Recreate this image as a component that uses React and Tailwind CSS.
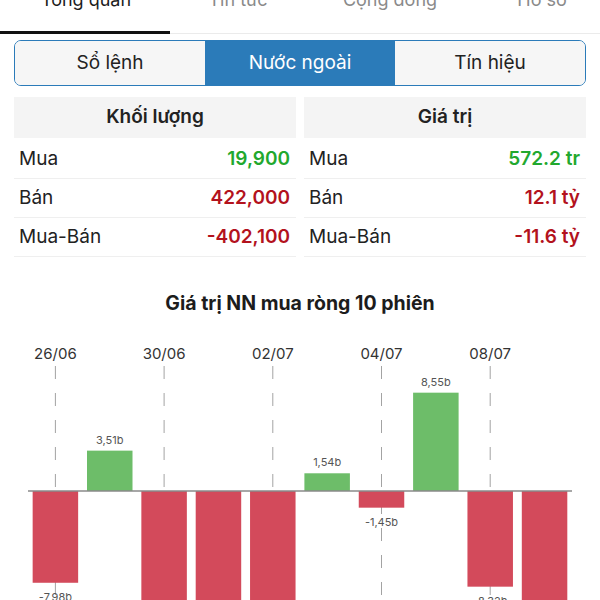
import React from 'react';

const tabs = ['Tổng quan', 'Tin tức', 'Cộng đồng', 'Hồ sơ'];
const segments = ['Sổ lệnh', 'Nước ngoài', 'Tín hiệu'];

const tables = [
  {
    title: 'Khối lượng',
    rows: [
      { label: 'Mua', value: '19,900', up: true },
      { label: 'Bán', value: '422,000' },
      { label: 'Mua-Bán', value: '-402,100' },
    ],
  },
  {
    title: 'Giá trị',
    rows: [
      { label: 'Mua', value: '572.2 tr', up: true },
      { label: 'Bán', value: '12.1 tỷ' },
      { label: 'Mua-Bán', value: '-11.6 tỷ' },
    ],
  },
];

// net foreign value per session (billion)
const sessions = [-7.98, 3.51, -12.64, -14.1, -10.92, 1.54, -1.45, 8.55, -8.32, -13.27];
const dates = ['26/06', '30/06', '02/07', '04/07', '08/07'];

const ZERO = 491;
const SCALE = 11.5;
const BAR_W = 45.5;
const center = (i) => 55.4 + i * 54.35;
const fmt = (v) => v.toFixed(2).replace('.', ',') + 'b';

const NetChart = () => (
  <svg width="600" height="300" viewBox="0 315 600 300" className="block">
    {dates.map((d, k) => (
      <g key={d}>
        <text x={center(k * 2)} y={359} textAnchor="middle" fontSize="15" fill="#333">
          {d}
        </text>
        <line
          x1={center(k * 2)}
          x2={center(k * 2)}
          y1={366}
          y2={620}
          stroke="#a3a3a3"
          strokeWidth="1"
          strokeDasharray="13 14"
        />
      </g>
    ))}
    {sessions.map((v, i) => {
      const h = Math.abs(v) * SCALE;
      const up = v >= 0;
      const x = center(i) - BAR_W / 2;
      return (
        <g key={i}>
          <rect x={x} y={up ? ZERO - h : ZERO} width={BAR_W} height={h} fill={up ? '#6dbd69' : '#d34a5b'} />
          <text
            x={center(i)}
            y={up ? ZERO - h - 7 : ZERO + h + 18}
            textAnchor="middle"
            fontSize="11"
            fill="#555"
          >
            {fmt(v)}
          </text>
        </g>
      );
    })}
    <line x1={28} x2={572} y1={ZERO} y2={ZERO} stroke="#8a8a8a" strokeWidth="1.5" />
  </svg>
);

export default function App() {
  return (
    <div className="w-[600px] h-[600px] overflow-hidden bg-white font-['Inter',sans-serif]">
      {/* top tabs, scrolled so the labels are half hidden */}
      <div className="relative h-[34px] border-b border-[#ebebeb]">
        <div className="flex -translate-y-[10px] ml-[10px]">
          {tabs.map((t, i) => (
            <div
              key={t}
              className={`w-[152px] shrink-0 text-center text-[18px] leading-[20px] ${
                i === 0 ? 'text-[#1c1c1c]' : 'text-[#8a8a8a]'
              }`}
            >
              {t}
            </div>
          ))}
        </div>
        <div className="absolute left-0 -bottom-px w-[170px] h-[3px] bg-[#111]" />
      </div>

      {/* segmented control */}
      <div className="mx-[14px] mt-[6px] h-[46px] flex rounded-[7px] border-[1.5px] border-[#2b7bb9] overflow-hidden">
        {segments.map((s, i) => (
          <div
            key={s}
            className={`flex-1 flex items-center justify-center text-[19px] ${
              i === 1 ? 'bg-[#2b7bb9] text-white' : 'bg-[#f6f6f6] text-[#222]'
            }`}
          >
            {s}
          </div>
        ))}
      </div>

      {/* summary tables */}
      <div className="mx-[14px] mt-[11px] grid grid-cols-2 gap-[8px]">
        {tables.map((tb) => (
          <div key={tb.title}>
            <div className="h-[41px] bg-[#f4f4f4] flex items-center justify-center text-[19px] font-semibold text-[#222]">
              {tb.title}
            </div>
            <div className="mt-[2px]">
              {tb.rows.map((r) => (
                <div
                  key={r.label}
                  className="h-[39px] border-b border-[#efefef] flex items-center justify-between pl-[5px] pr-[6px] text-[19px]"
                >
                  <span className="text-[#222]">{r.label}</span>
                  <span className={`font-semibold ${r.up ? 'text-[#22a82e]' : 'text-[#b3121d]'}`}>
                    {r.value}
                  </span>
                </div>
              ))}
            </div>
          </div>
        ))}
      </div>

      {/* chart */}
      <div className="mt-[34px] text-center text-[19.5px] leading-[24px] font-bold text-[#1c1c1c]">
        Giá trị NN mua ròng 10 phiên
      </div>
      <NetChart />
    </div>
  );
}
